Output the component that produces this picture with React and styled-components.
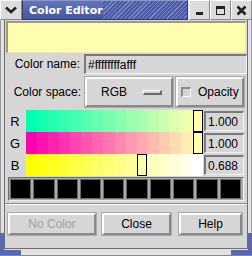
import React from 'react';
import styled, { createGlobalStyle } from 'styled-components';

const BG = '#d6d6d6';
const SWATCH = '#ffffaf';
const FRAME_BLUE = '#5a68b0';

const GlobalStyle = createGlobalStyle`
  html, body { margin: 0; padding: 0; background: ${BG}; }
  body {
    font-family: "Liberation Sans", Arial, sans-serif;
    font-size: 12px;
    color: #000;
  }
`;

const Window = styled.div`
  position: relative;
  width: 252px;
  height: 256px;
  display: flex;
  flex-direction: column;
  background: ${BG};
  overflow: hidden;
`;

const TitleBar = styled.div`
  height: 20px;
  flex: none;
  display: flex;
  background: #e6e6e6;
`;

const FrameButton = styled.div`
  width: ${p => p.$w || 21}px;
  flex: none;
  display: flex;
  align-items: center;
  justify-content: center;
  background: #dcdcdc;
  border-top: 1px solid #ffffff;
  border-left: 1px solid #ffffff;
  border-right: 1px solid #8a8a8a;
  border-bottom: 1px solid #8a8a8a;
  box-sizing: border-box;
`;

const Title = styled.div`
  flex: 1;
  display: flex;
  align-items: center;
  padding-left: 6px;
  margin: 0 1px 0 0;
  color: #fff;
  font-family: "DejaVu Sans", sans-serif;
  font-weight: bold;
  font-size: 11px;
  background:
    repeating-linear-gradient(-45deg, #4c5ca4 0 2px, #7a88c6 2px 3px) right / 84px 100% no-repeat,
    linear-gradient(#6675bb, #4455a0);
  border: 1px solid #2e3a72;
  border-top-color: #8a96d0;
`;

const Body = styled.div`
  flex: 1;
  display: flex;
  flex-direction: column;
  border-left: 1px solid #9a9a9a;
  border-right: 1px solid #9a9a9a;
  padding: 0 3px;
  background: #e2e2e2;
`;

const Inner = styled.div`
  flex: 1;
  display: flex;
  flex-direction: column;
  background: ${BG};
  border-left: 1px solid #6e6e6e;
  border-right: 1px solid #6e6e6e;
`;

const Swatch = styled.div`
  height: 32px;
  margin: 1px 0 0 1px;
  width: 240px;
  box-sizing: border-box;
  background: ${SWATCH};
  border-top: 2px solid #9e9e6e;
  border-left: 2px solid #9e9e6e;
  border-right: 1px solid #e8e8c0;
  border-bottom: 1px solid #e8e8c0;
`;

const Row = styled.div`
  display: flex;
  align-items: center;
  margin-top: ${p => p.$mt || 0}px;
  height: ${p => p.$h}px;
`;

const Label = styled.div`
  width: ${p => p.$w}px;
  flex: none;
  text-align: right;
  padding-right: 4px;
  box-sizing: border-box;
`;

const Entry = styled.div`
  height: 20px;
  width: ${p => p.$w}px;
  box-sizing: border-box;
  display: flex;
  align-items: center;
  padding-left: ${p => p.$pl || 2}px;
  background: ${BG};
  border-top: 2px solid #7a7a7a;
  border-left: 2px solid #7a7a7a;
  border-right: 1px solid #f4f4f4;
  border-bottom: 1px solid #f4f4f4;
  font-size: 12px;
  white-space: nowrap;
  overflow: hidden;
`;

const RaisedButton = styled.div`
  width: ${p => p.$w}px;
  height: ${p => p.$h}px;
  flex: none;
  box-sizing: border-box;
  display: flex;
  align-items: center;
  justify-content: ${p => p.$justify || 'center'};
  gap: ${p => p.$gap || 0}px;
  padding: ${p => p.$pad || '0'};
  margin-left: ${p => p.$ml || 0}px;
  background: ${BG};
  border-top: 2px solid #ffffff;
  border-left: 2px solid #ffffff;
  border-right: 2px solid #8a8a8a;
  border-bottom: 2px solid #8a8a8a;
  outline: 1px solid #a8a8a8;
  color: ${p => (p.$disabled ? '#a2a2a2' : '#000')};
`;

const MenuIndicator = styled.div`
  width: 19px;
  height: 5px;
  box-sizing: border-box;
  background: ${BG};
  border-top: 1px solid #fff;
  border-left: 1px solid #fff;
  border-right: 2px solid #6a6a6a;
  border-bottom: 2px solid #6a6a6a;
`;

const Check = styled.div`
  width: 10px;
  height: 10px;
  box-sizing: border-box;
  background: ${BG};
  border-top: 2px solid #8a8a8a;
  border-left: 2px solid #8a8a8a;
  border-right: 1px solid #fff;
  border-bottom: 1px solid #fff;
`;

const Sliders = styled.div`
  margin-top: 3px;
  display: grid;
  grid-template-columns: 20px 177px 40px;
  grid-auto-rows: 22px;
  column-gap: 1px;
`;

const SliderLabel = styled.div`
  display: flex;
  align-items: center;
  justify-content: center;
  font-size: 13px;
`;

const Track = styled.div`
  position: relative;
  display: flex;
`;

const Band = styled.div`
  flex: 1;
`;

const Thumb = styled.div`
  position: absolute;
  top: 0;
  bottom: 0;
  width: 10px;
  box-sizing: border-box;
  background: ${SWATCH};
  border: 1px solid #000;
`;

const ValueCell = styled.div`
  display: flex;
  align-items: center;
`;

const Palette = styled.div`
  margin: 1px 3px 0 3px;
  display: grid;
  grid-template-columns: repeat(10, 1fr);
  gap: 2px;
  padding: 1px 2px 1px 1px;
  background: #a9a9a9;
  border-top: 1px solid #6e6e6e;
  border-left: 1px solid #6e6e6e;
  border-bottom: 1px solid #f0f0f0;
  border-right: 1px solid #f0f0f0;
`;

const Cell = styled.div`
  height: 20px;
  background: #000;
  box-sizing: border-box;
  border: 1px solid #6a6a6a;
`;

const Separator = styled.div`
  margin-top: 2px;
  height: 0;
  border-top: 1px solid #8a8a8a;
  border-bottom: 1px solid #ffffff;
`;

const ButtonRow = styled.div`
  margin-top: 8px;
  display: flex;
  padding-left: 3px;
`;

const BottomBar = styled.div`
  height: 6px;
  flex: none;
  background: #e2e2e2;
  border-top: 1px solid #6e6e6e;
  border-bottom: 1px solid #8a8a8a;
`;

/* L-shaped resize grips drawn over the frame corners */
const Corner = styled.div`
  position: absolute;
  bottom: 1px;
  ${p => (p.$side === 'right' ? 'right: 0;' : 'left: 0;')}
  width: 21px;
  height: 22px;
  box-sizing: border-box;
  border-bottom: 5px solid ${FRAME_BLUE};
  ${p => (p.$side === 'right' ? 'border-right' : 'border-left')}: 4px solid ${FRAME_BLUE};
`;

const sliders = [
  { name: 'R', value: '1.000', pos: 167, from: [0, 255, 175], to: [255, 255, 175] },
  { name: 'G', value: '1.000', pos: 167, from: [255, 0, 175], to: [255, 255, 175] },
  { name: 'B', value: '0.688', pos: 111, from: [255, 255, 0], to: [255, 255, 255] },
];

const BANDS = 16;

function bandColor(from, to, i) {
  const t = i / (BANDS - 1);
  const c = from.map((v, k) => Math.round(v + (to[k] - v) * t));
  return `rgb(${c[0]}, ${c[1]}, ${c[2]})`;
}

function ChevronIcon() {
  return (
    <svg width="12" height="8" viewBox="0 0 12 8">
      <path d="M1 1.5 L6 6 L11 1.5" fill="none" stroke="#222" strokeWidth="2.6" />
    </svg>
  );
}

function MinIcon() {
  return (
    <svg width="11" height="11" viewBox="0 0 11 11">
      <rect x="2" y="7" width="7" height="3" fill="#222" />
    </svg>
  );
}

function MaxIcon() {
  return (
    <svg width="11" height="11" viewBox="0 0 11 11">
      <rect x="1.5" y="1.5" width="8" height="8" fill="none" stroke="#222" strokeWidth="1" />
      <rect x="1" y="1" width="9" height="3" fill="#222" />
    </svg>
  );
}

function CloseIcon() {
  return (
    <svg width="11" height="11" viewBox="0 0 11 11">
      <path d="M1.5 1.5 L9.5 9.5 M9.5 1.5 L1.5 9.5" stroke="#222" strokeWidth="2.6" />
    </svg>
  );
}

export default function App() {
  return (
    <Window>
      <GlobalStyle />
      <TitleBar>
        <FrameButton $w={22}><ChevronIcon /></FrameButton>
        <Title>Color Editor</Title>
        <FrameButton><MinIcon /></FrameButton>
        <FrameButton><MaxIcon /></FrameButton>
        <FrameButton><CloseIcon /></FrameButton>
      </TitleBar>

      <Body>
        <Inner>
          <Swatch />

          <Row $mt={1} $h={20}>
            <Label $w={79}>Color name:</Label>
            <Entry $w={164}>#ffffffffafff</Entry>
          </Row>

          <Row $mt={3} $h={30}>
            <Label $w={80}>Color space:</Label>
            <RaisedButton $w={88} $h={30} $justify="space-between" $pad="0 9px 0 14px">
              RGB
              <MenuIndicator />
            </RaisedButton>
            <RaisedButton $w={68} $h={30} $justify="flex-start" $gap={7} $pad="0 0 0 3px" $ml={3}>
              <Check />
              Opacity
            </RaisedButton>
          </Row>

          <Sliders>
            {sliders.map(s => (
              <React.Fragment key={s.name}>
                <SliderLabel>{s.name}</SliderLabel>
                <Track>
                  {Array.from({ length: BANDS }, (_, i) => (
                    <Band key={i} style={{ background: bandColor(s.from, s.to, i) }} />
                  ))}
                  <Thumb style={{ left: s.pos }} />
                </Track>
                <ValueCell>
                  <Entry $w={40} $pl={2}>{s.value}</Entry>
                </ValueCell>
              </React.Fragment>
            ))}
          </Sliders>

          <Palette>
            {Array.from({ length: 10 }, (_, i) => <Cell key={i} />)}
          </Palette>

          <Separator />

          <ButtonRow>
            <RaisedButton $w={88} $h={22} $disabled>No Color</RaisedButton>
            <RaisedButton $w={69} $h={22} $ml={6}>Close</RaisedButton>
            <RaisedButton $w={63} $h={22} $ml={8}>Help</RaisedButton>
          </ButtonRow>
        </Inner>
      </Body>

      <BottomBar />
      <Corner $side="left" />
      <Corner $side="right" />
    </Window>
  );
}
